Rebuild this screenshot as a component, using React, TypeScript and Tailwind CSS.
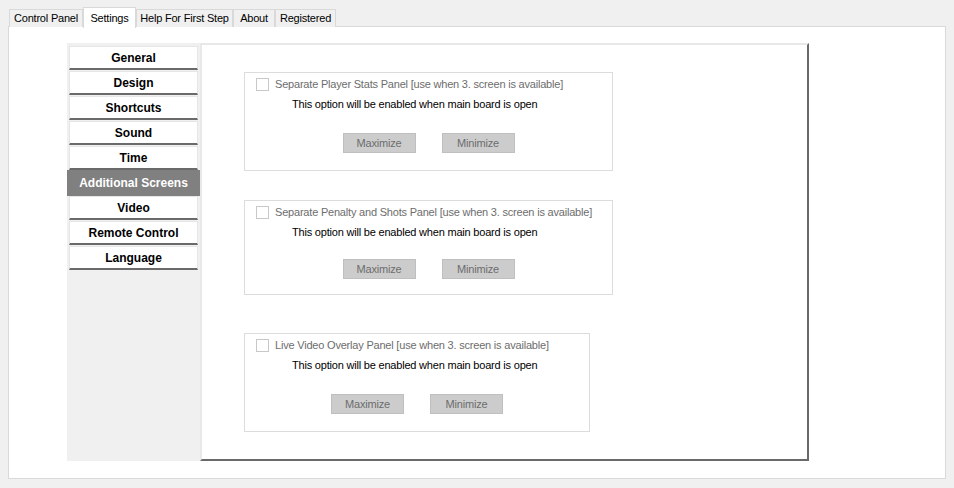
import React from "react";

const tabs = [
  { label: "Control Panel", w: "w-[74px]", active: false },
  { label: "Settings", w: "w-[53px]", active: true },
  { label: "Help For First Step", w: "w-[97px]", active: false },
  { label: "About", w: "w-[42px]", active: false },
  { label: "Registered", w: "w-[61px]", active: false },
];

const menu = [
  "General",
  "Design",
  "Shortcuts",
  "Sound",
  "Time",
  "Additional Screens",
  "Video",
  "Remote Control",
  "Language",
];

function Group({
  title,
  w,
  h,
  btnMt,
}: {
  title: string;
  w: string;
  h: string;
  btnMt: string;
}) {
  return (
    <div className={`${w} ${h} border border-[#dcdcdc] flex flex-col`}>
      <div className="mt-[5px] ml-[11px] flex items-center h-[13px]">
        <div className="w-[13px] h-[13px] border border-[#c8c8c8] bg-white shrink-0" />
        <span className="ml-[6px] text-[11px] leading-[13px] tracking-[-0.2px] text-[#6d6d6d] whitespace-nowrap">
          {title}
        </span>
      </div>
      <div className="mt-[6px] pl-[47px] h-[14px] leading-[14px] text-[11px] text-black tracking-[-0.2px] whitespace-nowrap">
        This option will be enabled when main board is open
      </div>
      <div className={`${btnMt} flex justify-center gap-[26px]`}>
        <div className="w-[73px] h-[20px] bg-[#cccccc] border border-[#bfbfbf] text-[#6d6d6d] text-[11px] tracking-[-0.2px] flex items-center justify-center">
          Maximize
        </div>
        <div className="w-[73px] h-[20px] bg-[#cccccc] border border-[#bfbfbf] text-[#6d6d6d] text-[11px] tracking-[-0.2px] flex items-center justify-center">
          Minimize
        </div>
      </div>
    </div>
  );
}

export default function App() {
  return (
    <div
      className="w-[954px] h-[488px] bg-[#f0f0f0] overflow-hidden"
      style={{ fontFamily: '"Liberation Sans", Arial, sans-serif' }}
    >
      {/* tab strip */}
      <div className="h-[27px] pl-[9px] pt-[6px] flex items-end relative z-10">
        {tabs.map((t) =>
          t.active ? (
            <div
              key={t.label}
              className={`${t.w} h-[21px] bg-white border border-b-0 border-[#d9d9d9] text-[11px] tracking-[-0.2px] text-black flex items-start justify-center pt-[2px] -mb-px whitespace-nowrap`}
            >
              {t.label}
            </div>
          ) : (
            <div
              key={t.label}
              className={`${t.w} h-[18px] bg-[#f0f0f0] border border-b-0 border-[#d9d9d9] text-[11px] tracking-[-0.2px] text-black flex items-center justify-center whitespace-nowrap`}
            >
              {t.label}
            </div>
          )
        )}
      </div>
      {/* tab page */}
      <div className="mx-[8px] h-[453px] bg-white border border-[#d9d9d9] -mt-px pt-[16px] pl-[58px]">
        <div className="flex w-[742px] h-[418px]">
          {/* sidebar */}
          <div className="w-[133px] h-full bg-[#f0f0f0] pt-[3px] pl-[2px] pr-[2px] flex flex-col">
            {menu.map((m) =>
              m === "Additional Screens" ? (
                <div
                  key={m}
                  className="-ml-[2px] -mr-[2px] -mt-px h-[26px] bg-[#808080] text-white font-bold text-[12px] flex items-center justify-center"
                >
                  {m}
                </div>
              ) : (
                <div
                  key={m}
                  className="h-[24px] mb-[1px] bg-white border-t border-l border-r border-[#e6e6e6] border-b-2 border-b-[#6a6a6a] text-black font-bold text-[12px] flex items-center justify-center"
                >
                  {m}
                </div>
              )
            )}
          </div>
          {/* content panel */}
          <div className="flex-1 h-full bg-white border-t-2 border-l-2 border-[#e8e8e8] border-r-2 border-b-2 border-r-[#6a6a6a] border-b-[#6a6a6a] pl-[42px] pt-[27px] flex flex-col">
            <Group
              title="Separate Player Stats Panel [use when 3. screen is available]"
              w="w-[369px]"
              h="h-[99px]"
              btnMt="mt-[22px]"
            />
            <div className="h-[29px]" />
            <Group
              title="Separate Penalty and Shots Panel [use when 3. screen is available]"
              w="w-[369px]"
              h="h-[95px]"
              btnMt="mt-[20px]"
            />
            <div className="h-[38px]" />
            <Group
              title="Live Video Overlay Panel [use when 3. screen is available]"
              w="w-[346px]"
              h="h-[99px]"
              btnMt="mt-[22px]"
            />
          </div>
        </div>
      </div>
    </div>
  );
}
